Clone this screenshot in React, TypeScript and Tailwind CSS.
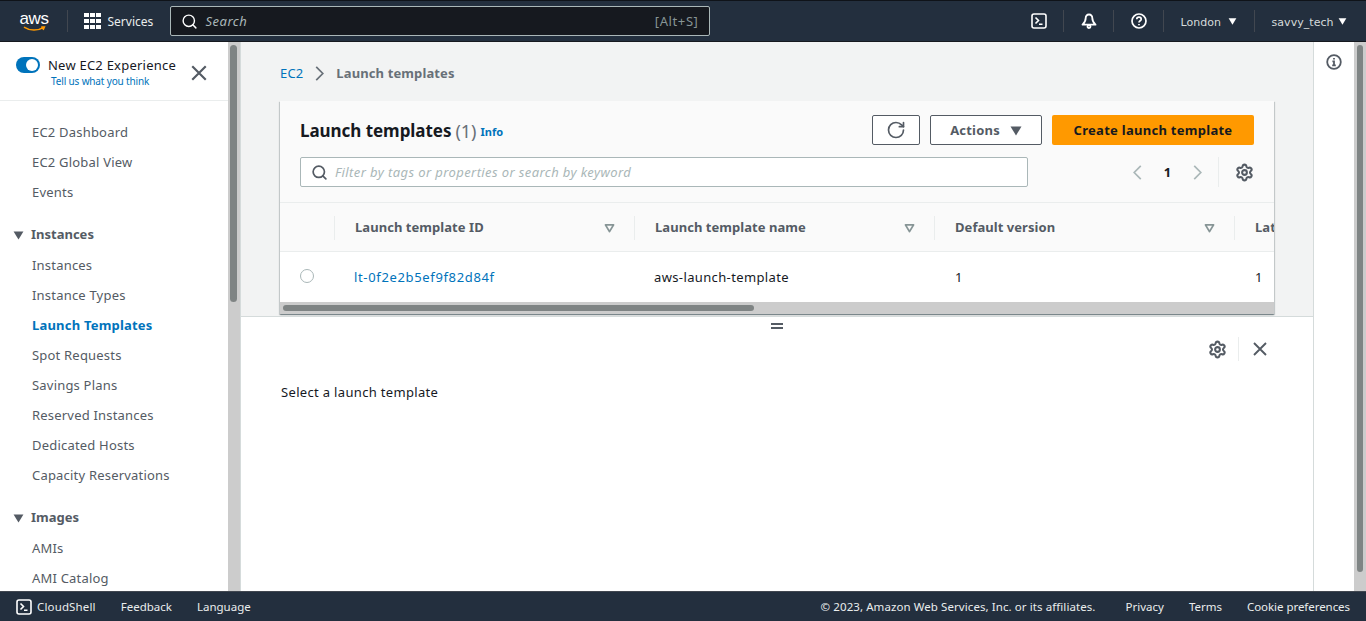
import { Search, RotateCw, Settings } from 'lucide-react';

const Caret = ({ className }: { className: string }) => (
  <svg viewBox="0 0 12 10" className={className} fill="currentColor">
    <path d="M0.5 0.5h11L6 9.5z" />
  </svg>
);

const SortIcon = () => (
  <svg viewBox="0 0 12 10" className="w-[11px] h-[9px] text-[#879596]" fill="none" stroke="currentColor" strokeWidth="2">
    <path d="M1.5 1h9L6 8.5z" strokeLinejoin="round" />
  </svg>
);

const ShellIcon = ({ className }: { className: string }) => (
  <svg viewBox="0 0 16 16" className={className} fill="none" stroke="currentColor" strokeWidth="1.6">
    <rect x="1" y="1" width="14" height="14" rx="2" />
    <path d="M4.5 4.5 7.5 7.5 4.5 10.5M8 11.2h3.5" />
  </svg>
);

const CloseIcon = ({ className }: { className: string }) => (
  <svg viewBox="0 0 16 16" className={className} fill="none" stroke="currentColor" strokeWidth="1.9">
    <path d="M2 2 14 14M14 2 2 14" />
  </svg>
);

const Chevron = ({ className, left }: { className: string; left?: boolean }) => (
  <svg viewBox="0 0 11 16" className={className} fill="none" stroke="currentColor" strokeWidth="1.8">
    <path d={left ? 'M9 1 2 8l7 7' : 'M2 1l7 7-7 7'} />
  </svg>
);

const Gear = () => <Settings className="w-[19px] h-[19px] text-[#545b64]" strokeWidth={2.6} />;

const navTop = ['EC2 Dashboard', 'EC2 Global View', 'Events'];
const navInstances = [
  'Instances',
  'Instance Types',
  'Launch Templates',
  'Spot Requests',
  'Savings Plans',
  'Reserved Instances',
  'Dedicated Hosts',
  'Capacity Reservations',
];
const navImages = ['AMIs', 'AMI Catalog'];

const NavItem = ({ label }: { label: string }) => (
  <a
    className={
      label === 'Launch Templates'
        ? 'block h-[30px] pl-8 leading-[30px] text-[13px] tracking-[0.2px] font-bold text-[#0073bb]'
        : 'block h-[30px] pl-8 leading-[30px] text-[13px] tracking-[0.2px] text-[#545b64]'
    }
  >
    {label}
  </a>
);

const NavSection = ({ label }: { label: string }) => (
  <div className="flex items-center h-[30px] pl-[13px] gap-[7px] text-[13px] font-bold text-[#545b64]">
    <Caret className="w-[11px] h-[9px]" />
    <span>{label}</span>
  </div>
);

const ColHeader = ({ label }: { label: string }) => (
  <div className="w-[300px] shrink-0 flex items-center h-6 border-l border-[#eaeded] pl-5 pr-[19px] justify-between">
    <span className="text-[13px] tracking-[0.05px] font-bold text-[#545b64] whitespace-nowrap">{label}</span>
    <SortIcon />
  </div>
);

export default function App() {
  return (
    <div className="flex flex-col h-[621px] w-[1366px] overflow-hidden font-['Noto_Sans',sans-serif]">
      {/* top nav */}
      <header className="h-[42px] shrink-0 flex items-center bg-[#232f3e] border-t border-[#0f1319] border-b-[#16191f] border-b text-white">
        <div className="w-[67px] pl-[13px] shrink-0 flex flex-col items-center">
          <span className="text-[17px] leading-[15px] font-['Liberation_Sans',sans-serif] tracking-tight mr-3">aws</span>
          <svg viewBox="0 0 24 6" className="w-[23px] h-[6px] text-[#f90] mr-3" fill="none" stroke="currentColor" strokeWidth="1.5">
            <path d="M1 1c6 4 15 4 21 0M19 .8h3.4L21 4" />
          </svg>
        </div>
        <div className="w-px h-[22px] bg-[#414750]" />
        <div className="grid grid-cols-3 gap-[1.5px] ml-[16px]">
          {Array.from({ length: 9 }).map((_, i) => (
            <span key={i} className="w-[4.5px] h-[4.5px] bg-white" />
          ))}
        </div>
        <span className="ml-[7px] w-[62px] pt-[2px] text-[12px] text-[#eaeded]">Services</span>
        <div className="w-[540px] h-[30px] flex items-center bg-[#16191f] border border-[#aab7b8] rounded-[2px] pl-[10px] pr-[10px]">
          <Search className="w-[17px] h-[17px] text-white" strokeWidth={2} />
          <span className="ml-[8px] flex-1 pt-[1px] text-[13px] tracking-[0.5px] italic text-[#aab7b8]">Search</span>
          <span className="pt-[1px] text-[13px] tracking-[0.6px] text-[#879596]">[Alt+S]</span>
        </div>
        <div className="ml-[321px] flex items-center h-full">
          <ShellIcon className="w-4 h-4 text-white" />
          <div className="ml-[16px] w-px h-[22px] bg-[#414750]" />
          <svg viewBox="0 0 16 16" className="w-[16px] h-[16px] ml-[17px] text-white" fill="none" stroke="currentColor" strokeWidth="1.8">
            <path d="M8 1.5c-2.2 0-3.3 1.6-3.3 3.5 0 3-1.2 4.8-3.2 6.7h13c-2-1.9-3.2-3.7-3.2-6.7 0-1.9-1.1-3.5-3.3-3.5z" strokeLinejoin="round" />
            <circle cx="8" cy="13.5" r="1.5" />
          </svg>
          <div className="ml-[16px] w-px h-[22px] bg-[#414750]" />
          <svg viewBox="0 0 16 16" className="w-4 h-4 ml-[17px] text-white" fill="none" stroke="currentColor" strokeWidth="1.7">
            <circle cx="8" cy="8" r="7" />
            <path d="M5.8 6.2C5.8 5 6.8 4.2 8 4.2s2.2.8 2.2 2C10.2 7.8 8 7.8 8 9.6M8 11v1.2" />
          </svg>
          <div className="ml-[16px] w-px h-[22px] bg-[#414750]" />
          <span className="ml-[17px] w-[41px] pt-[2px] text-[11px] tracking-[0.05px] text-[#d5dbdb] font-['DejaVu_Sans',sans-serif] leading-none">London</span>
          <Caret className="w-[9px] h-[7px] ml-[6px] text-white" />
          <div className="ml-[17px] w-px h-[22px] bg-[#414750]" />
          <span className="ml-[17px] w-[61px] pt-[2px] text-[11px] tracking-[0.05px] text-[#d5dbdb] font-['DejaVu_Sans',sans-serif] leading-none">savvy_tech</span>
          <Caret className="w-[9px] h-[7px] ml-[5px] text-white" />
        </div>
      </header>

      <div className="flex-1 flex min-h-0">
        {/* side nav */}
        <aside className="w-[228px] shrink-0 overflow-hidden bg-white">
          <div className="h-[59px] border-b border-[#eaeded] flex pl-[16px] pt-[13px]">
            <div>
              <div className="flex items-center h-[19px]">
                <span className="w-[24px] h-[16px] rounded-full bg-[#0073bb] flex justify-end items-center pr-[2px]">
                  <span className="w-[12px] h-[12px] rounded-full bg-white" />
                </span>
                <span className="ml-[8px] pt-[2px] text-[13px] tracking-[0.23px] text-[#16191f] whitespace-nowrap">New EC2 Experience</span>
              </div>
              <div className="text-[10px] tracking-[-0.15px] text-[#0073bb] ml-[35px]">Tell us what you think</div>
            </div>
            <CloseIcon className="w-[18px] h-[18px] ml-[14px] mt-[9px] text-[#545b64]" />
          </div>
          <nav className="pt-[16px]">
            {navTop.map((n) => (
              <NavItem key={n} label={n} />
            ))}
            <div className="h-[13px]" />
            <NavSection label="Instances" />
            {navInstances.map((n) => (
              <NavItem key={n} label={n} />
            ))}
            <div className="h-[13px]" />
            <NavSection label="Images" />
            {navImages.map((n) => (
              <NavItem key={n} label={n} />
            ))}
          </nav>
        </aside>

        {/* side scrollbar */}
        <div className="w-[13px] shrink-0 bg-[#cccccc] border-r border-[#d5dbdb] pt-[3px] pl-[2px]">
          <div className="w-[7px] h-[257px] rounded-full bg-[#7f8484]" />
        </div>

        {/* content */}
        <main className="w-[1072px] shrink-0 flex flex-col">
          <div className="h-[275px] shrink-0 bg-[#f2f3f3] border-b border-[#d5dbdb] pl-[39px] pr-[39px] overflow-hidden">
            <div className="flex items-center h-[59px] pt-[5px] text-[13px]">
              <span className="tracking-[0.15px] text-[#0073bb]">EC2</span>
              <Chevron className="w-[11px] h-[15px] ml-[11px] mb-[1px] text-[#687078]" />
              <span className="ml-[11px] tracking-[0.12px] font-bold text-[#687078]">Launch templates</span>
            </div>
            <section className="w-[994px] h-[213px] bg-white shadow-[0_1px_1px_0_rgba(0,28,36,0.3),1px_1px_1px_0_rgba(0,28,36,0.15),-1px_1px_1px_0_rgba(0,28,36,0.15)] flex flex-col">
              <div className="h-[102px] shrink-0 bg-[#fafafa] border-b border-[#eaeded] px-5 pt-[14px]">
                <div className="flex items-center h-[30px]">
                  <h1 className="pt-[2px] text-[17px] tracking-[-0.05px] font-bold text-[#16191f] whitespace-nowrap">Launch templates</h1>
                  <span className="ml-[4px] pt-[2px] text-[18px] text-[#687078]">(1)</span>
                  <a className="ml-[4px] mt-[5px] text-[11px] font-bold text-[#0073bb]">Info</a>
                  <button className="ml-auto w-[48px] h-[30px] flex items-center justify-center border border-[#545b64] rounded-[2px] bg-white">
                    <RotateCw className="w-[20px] h-[20px] text-[#545b64]" strokeWidth={2} />
                  </button>
                  <button className="ml-[10px] w-[112px] h-[30px] flex items-center justify-center gap-[10px] border border-[#545b64] rounded-[2px] bg-white pt-[1px] text-[13px] tracking-[0.2px] font-bold text-[#545b64]">
                    Actions
                    <Caret className="w-[12px] h-[10px]" />
                  </button>
                  <button className="ml-[10px] w-[202px] h-[30px] rounded-[2px] bg-[#ff9900] pt-[1px] text-[13px] tracking-[0.28px] font-bold text-[#16191f]">
                    Create launch template
                  </button>
                </div>
                <div className="flex items-center h-[30px] mt-[12px]">
                  <div className="w-[728px] h-[30px] flex items-center border border-[#aab7b8] rounded-[2px] bg-white pl-[10px]">
                    <Search className="w-[17px] h-[17px] text-[#545b64]" strokeWidth={2.4} />
                    <span className="ml-[7px] pt-[1px] text-[13px] tracking-[0.4px] italic text-[#aab7b8]">Filter by tags or properties or search by keyword</span>
                  </div>
                  <Chevron left className="ml-[104px] w-[11px] h-[15px] text-[#aab7b8]" />
                  <span className="w-[49px] text-center pt-[1px] text-[13px] font-bold text-[#16191f]">1</span>
                  <Chevron className="w-[11px] h-[15px] text-[#aab7b8]" />
                  <div className="ml-[15px] w-px h-[30px] bg-[#eaeded]" />
                  <div className="ml-[16px]">
                    <Gear />
                  </div>
                </div>
              </div>
              <div className="overflow-hidden flex-1 flex flex-col">
                <div className="h-[49px] shrink-0 flex items-center pt-[2px] bg-[#fafafa] border-b border-[#eaeded]">
                  <div className="w-[54px] shrink-0" />
                  <ColHeader label="Launch template ID" />
                  <ColHeader label="Launch template name" />
                  <ColHeader label="Default version" />
                  <ColHeader label="Latest version" />
                </div>
                <div className="h-[50px] shrink-0 flex items-center pt-[2px] text-[13px] text-[#16191f] bg-white">
                  <div className="w-[74px] shrink-0 pl-5">
                    <span className="block w-[14px] h-[14px] mb-[4px] rounded-full border border-[#aab7b8] bg-white" />
                  </div>
                  <a className="w-[300px] shrink-0 tracking-[0.65px] text-[#0073bb]">lt-0f2e2b5ef9f82d84f</a>
                  <span className="w-[301px] shrink-0 tracking-[0.37px]">aws-launch-template</span>
                  <span className="w-[300px] shrink-0">1</span>
                  <span className="w-[19px] shrink-0">1</span>
                </div>
                <div className="h-[12px] shrink-0 bg-[#cccccc] pt-[3px] pl-[3px]">
                  <div className="w-[471px] h-[6px] rounded-full bg-[#7f8484]" />
                </div>
              </div>
            </section>
          </div>
          {/* split panel */}
          <div className="flex-1 bg-white pl-[40px] pr-[39px]">
            <div className="flex flex-col items-center gap-[2px] pt-[6px] mr-[2px] h-[16px]">
              <span className="w-[12px] h-[2px] bg-[#545b64]" />
              <span className="w-[12px] h-[2px] bg-[#545b64]" />
            </div>
            <div className="flex items-center justify-end h-[30px] mt-[1px]">
              <Gear />
              <div className="ml-[11px] w-px h-[24px] bg-[#eaeded]" />
              <CloseIcon className="ml-[13px] mr-[6px] w-[16px] h-[16px] text-[#545b64]" />
            </div>
            <p className="mt-[19px] text-[13px] tracking-[0.33px] text-[#16191f]">Select a launch template</p>
          </div>
        </main>

        {/* tools panel */}
        <aside className="w-[41px] shrink-0 bg-white border-l border-[#d5dbdb] flex justify-center pt-[12px]">
          <svg viewBox="0 0 16 16" className="w-4 h-4 text-[#545b64]" fill="none" stroke="currentColor" strokeWidth="1.8">
            <circle cx="8" cy="8" r="6.8" />
            <path d="M8 4v1.6M6.4 7.4H8v4M6.2 11.4h3.6" />
          </svg>
        </aside>
        <div className="w-[12px] shrink-0 bg-[#cccccc] pt-[3px] pl-[3px]">
          <div className="w-[6px] h-[527px] rounded-full bg-[#7f8484]" />
        </div>
      </div>

      {/* footer */}
      <footer className="h-[30px] shrink-0 flex items-center bg-[#232f3e] border-t border-[#414750] pl-4 pr-4 pt-[1px] text-[11.5px] text-[#eaeded]">
        <ShellIcon className="w-4 h-4 text-white" />
        <span className="ml-[5px] tracking-[0.15px]">CloudShell</span>
        <span className="ml-[25px]">Feedback</span>
        <span className="ml-[25px]">Language</span>
        <span className="ml-auto tracking-[0.08px]">© 2023, Amazon Web Services, Inc. or its affiliates.</span>
        <span className="ml-[30px]">Privacy</span>
        <span className="ml-[25px]">Terms</span>
        <span className="ml-[25px] tracking-[-0.05px]">Cookie preferences</span>
      </footer>
    </div>
  );
}
